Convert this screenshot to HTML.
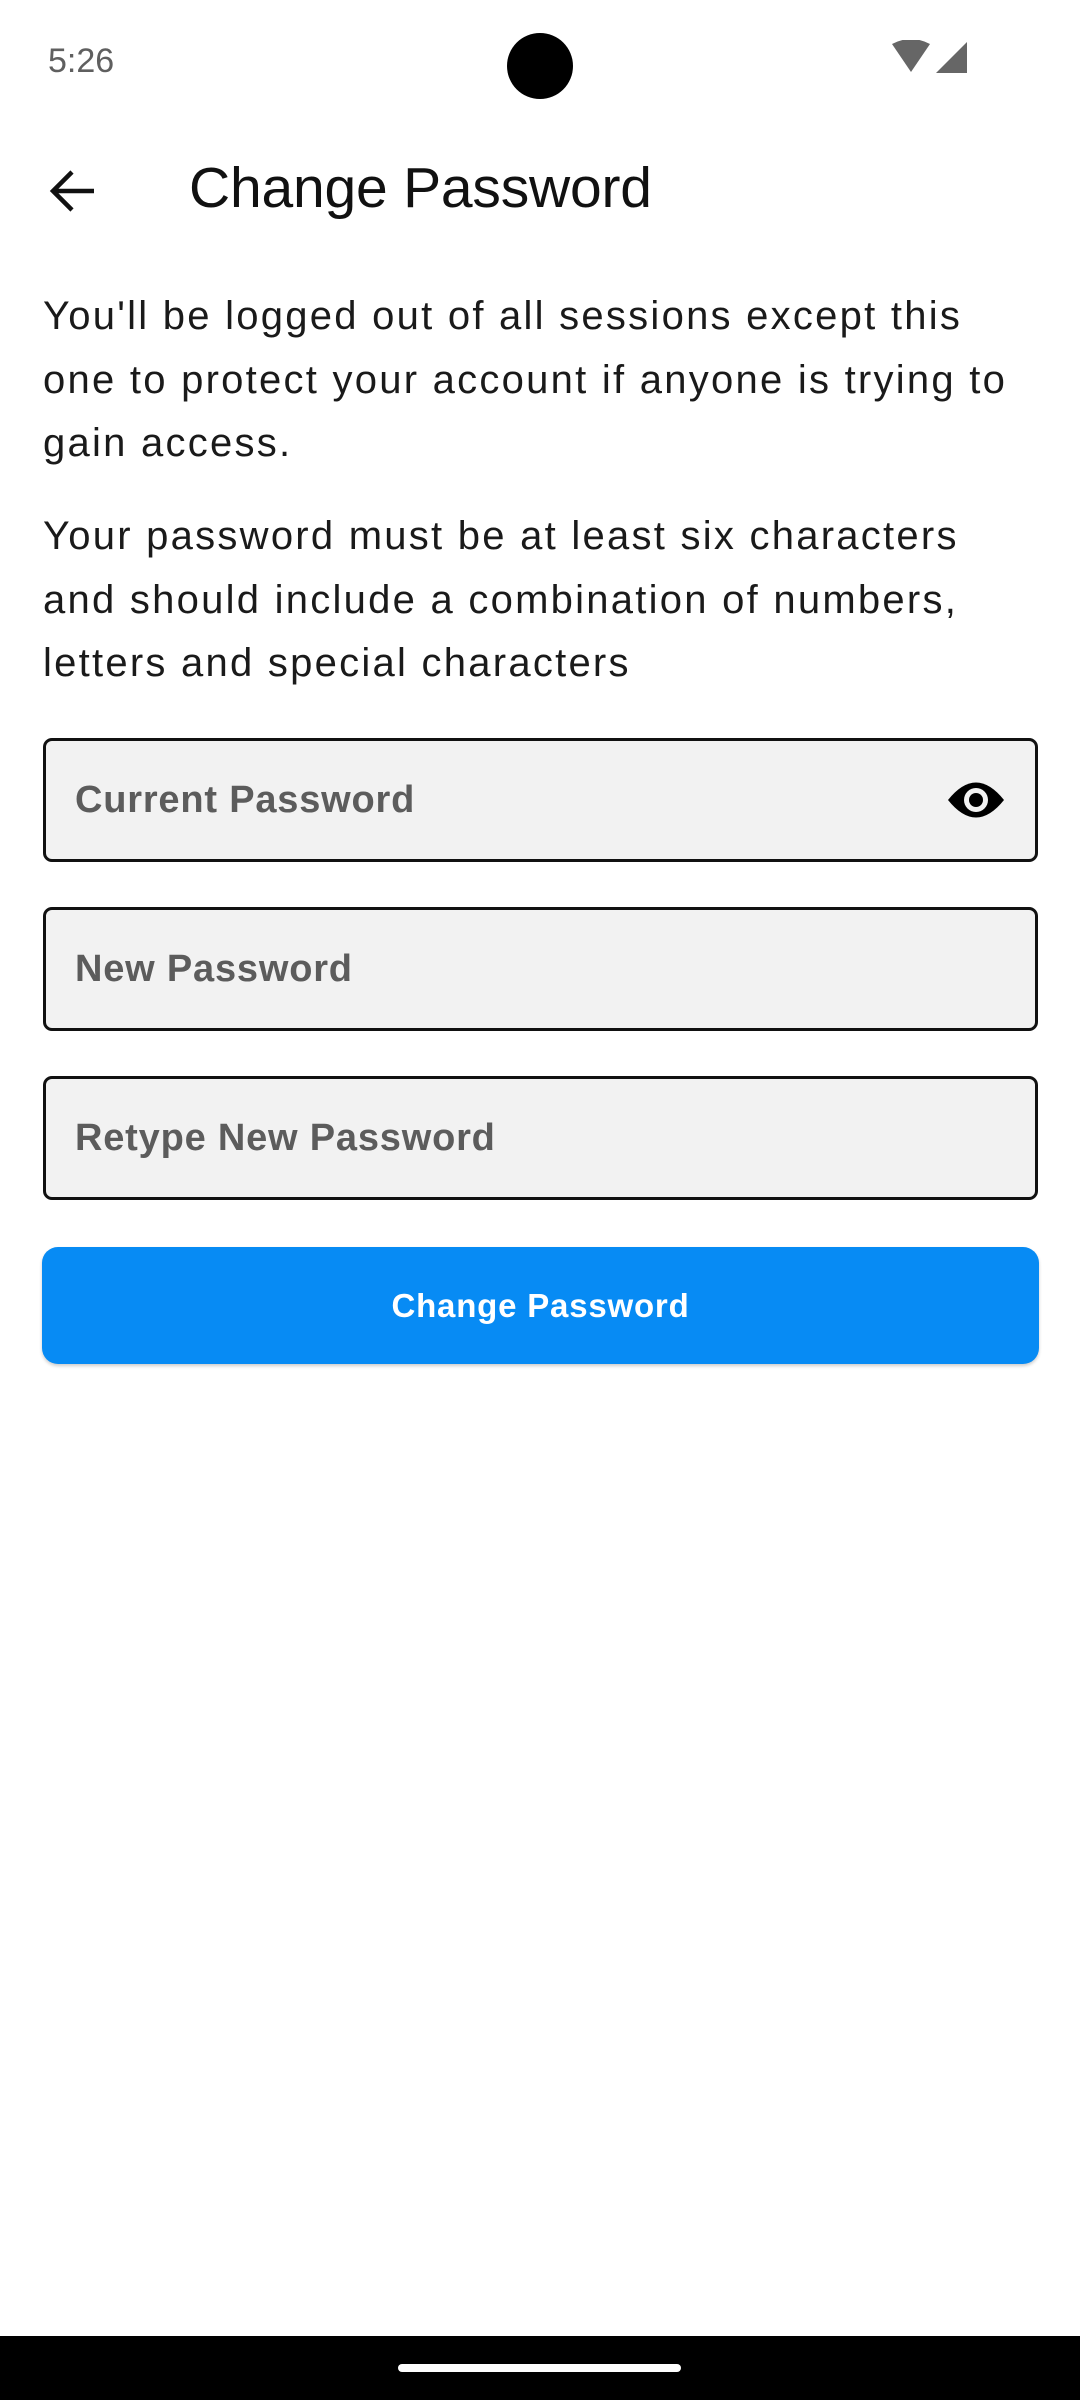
<!DOCTYPE html>
<html><head><meta charset="utf-8"><style>
*{margin:0;padding:0;box-sizing:border-box}
body{width:1080px;height:2400px;background:#fff;position:relative;overflow:hidden;font-family:"Liberation Sans",sans-serif}
.abs{position:absolute}
.p{position:absolute;left:43px;font-size:40px;line-height:63.5px;color:#1a1a1a;letter-spacing:2.25px;width:1035px;white-space:nowrap}
.box{position:absolute;left:43px;width:995px;height:124px;background:#f2f2f2;border:3px solid #111;border-radius:9px}
.box span{position:absolute;left:29px;top:0;line-height:118px;font-size:38px;color:#5c5c5c;font-weight:bold;letter-spacing:0.8px}
</style></head><body>
<div class="abs" style="left:48px;top:42px;font-size:34px;color:#5f5f5f">5:26</div>
<div class="abs" style="left:507px;top:33px;width:66px;height:66px;border-radius:50%;background:#000"></div>
<svg class="abs" style="left:892px;top:40px" width="75" height="36" viewBox="0 0 75 36"><path d="M0 4 Q19 -6 38 4 L19 32 Z" fill="#666"/><path d="M75 2 L75 33 L44 33 Z" fill="#666"/></svg>
<svg class="abs" style="left:48px;top:168px" width="50" height="46" viewBox="0 0 50 46"><path d="M46 23 H6 M24 4 L5 23 L24 42" stroke="#111" stroke-width="4.5" fill="none"/></svg>
<div class="abs" style="left:189px;top:155px;font-size:57px;color:#111;letter-spacing:-0.2px">Change Password</div>
<div class="p" style="top:285px">You'll be logged out of all sessions except this<br>one to protect your account if anyone is trying to<br>gain access.</div>
<div class="p" style="top:505px">Your password must be at least six characters<br>and should include a combination of numbers,<br>letters and special characters</div>
<div class="box" style="top:738px"><span>Current Password</span>
<svg class="abs" style="left:900px;top:36px" width="60" height="46" viewBox="0 0 60 46"><path d="M2 23 Q30 -12 58 23 Q30 58 2 23 Z" fill="#000"/><circle cx="30" cy="23" r="12" fill="#f2f2f2"/><circle cx="30" cy="23" r="7" fill="#000"/></svg></div>
<div class="box" style="top:907px"><span>New Password</span></div>
<div class="box" style="top:1076px"><span>Retype New Password</span></div>
<div class="abs" style="left:42px;top:1247px;width:997px;height:117px;background:#078bf4;border-radius:16px;color:#fff;font-weight:bold;font-size:33px;letter-spacing:0.8px;text-align:center;line-height:117px;box-shadow:0 2px 3px rgba(0,0,0,0.2)">Change Password</div>
<div class="abs" style="left:0;top:2336px;width:1080px;height:64px;background:#000"></div>
<div class="abs" style="left:398px;top:2364px;width:283px;height:8px;border-radius:4px;background:#fff"></div>
</body></html>
